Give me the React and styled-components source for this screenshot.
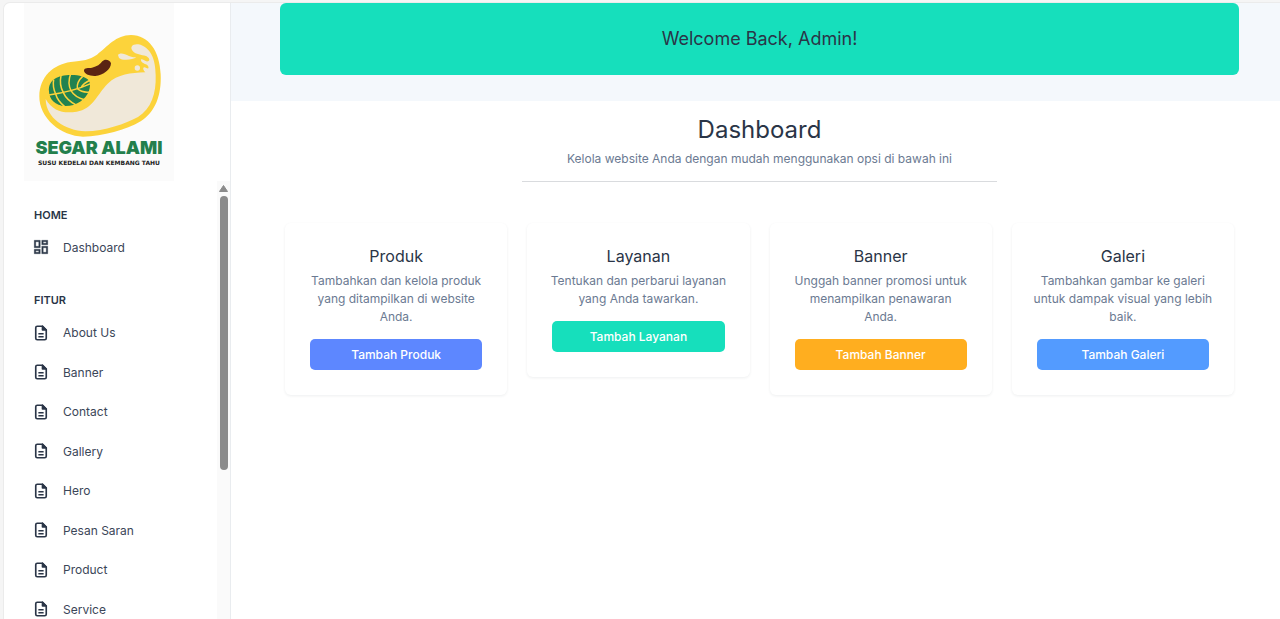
import React from "react";
import styled, { createGlobalStyle } from "styled-components";

const GlobalStyle = createGlobalStyle`
  * { box-sizing: border-box; }
  html, body { margin: 0; height: 100%; }
  #root { height: 100%; }
  body {
    background: #f5f5f5;
    color: #2a3547;
    font-family: Inter, "Liberation Sans", sans-serif;
    font-size: 12px;
    overflow: hidden;
  }
  h1, h2, h3, p, ul { margin: 0; padding: 0; font-weight: 400; }
`;

const Frame = styled.div`
  height: 100%;
  padding: 3px 0 0 4px;
`;

const Page = styled.div`
  display: flex;
  height: 100%;
  overflow: hidden;
  background: #fff;
  border-top-left-radius: 6px;
  box-shadow: 0 0 0 1px #ebebeb;
`;

const Sidebar = styled.aside`
  flex: 0 0 227px;
  display: flex;
  flex-direction: column;
  border-right: 1px solid #e9ecef;
`;

const Brand = styled.a`
  display: flex;
  flex-direction: column;
  align-items: center;
  width: 150px;
  height: 178px;
  margin-left: 20px;
  padding-top: 22px;
  background: #fbfbfb;
  text-decoration: none;
  white-space: nowrap;
  flex-shrink: 0;
`;

const BrandName = styled.span`
  color: #237f4c;
  font-size: 18px;
  line-height: 20px;
  font-weight: 900;
`;

const BrandTagline = styled.span`
  color: #222;
  font-family: "DejaVu Sans", sans-serif;
  font-size: 6px;
  line-height: 10px;
  font-weight: 700;
`;

const NavArea = styled.div`
  flex: 1;
  min-height: 0;
  display: flex;
  overflow: hidden;
`;

const Nav = styled.nav`
  flex: 1;
  padding: 24px 0 0 28px;
`;

const NavHeading = styled.h2`
  padding-left: 2px;
  font-size: 11px;
  line-height: 20px;
  font-weight: 600;
`;

const NavList = styled.ul`
  display: grid;
  grid-auto-rows: 1fr;
  list-style: none;
  min-height: ${(p) => p.$height}px;
  margin-bottom: 24px;
  margin-top: 3px;
`;

const NavLink = styled.a`
  display: flex;
  align-items: center;
  gap: 13px;
  height: 100%;
  color: #3b4658;
  font-size: 12px;
  text-decoration: none;
  svg { color: #2a3547; flex-shrink: 0; }
`;

const ScrollTrack = styled.div`
  flex: 0 0 13px;
  display: flex;
  flex-direction: column;
  align-items: center;
  gap: 4px;
  padding-top: 4px;
  background: #fafafa;
`;

const ScrollThumb = styled.div`
  width: 8px;
  height: 274px;
  border-radius: 4px;
  background: #8b8b8b;
`;

const Main = styled.main`
  flex: 1;
  min-width: 0;
`;

const Hero = styled.header`
  padding: 0 41px 26px 49px;
  background: #f4f8fc;
`;

const Welcome = styled.p`
  padding: 1px 0;
  border-radius: 6px;
  background: #16dfbc;
  font-size: 18px;
  line-height: 70px;
  text-align: center;
`;

const Content = styled.section`
  padding: 14px 46px 0 54px;
  text-align: center;
`;

const Title = styled.h1`
  font-size: 24px;
  line-height: 30px;
`;

const Subtitle = styled.p`
  margin-top: 5px;
  color: #6b7a92;
  font-size: 12px;
  line-height: 18px;
`;

const Divider = styled.hr`
  width: 50%;
  height: 1px;
  margin: 13px auto 41px;
  border: 0;
  background: #d9dbde;
`;

const Cards = styled.div`
  display: grid;
  grid-template-columns: repeat(4, 1fr);
  align-items: start;
  gap: 20px;
`;

const Card = styled.article`
  padding: 21px 20px 25px;
  border-radius: 6px;
  background: #fff;
  box-shadow: 0 1px 3px rgba(40, 50, 70, 0.08);
`;

const CardTitle = styled.h2`
  font-size: 16px;
  line-height: 24px;
`;

const CardText = styled.p`
  margin: 4px 0 13px;
  color: #6b7a92;
  font-size: 12px;
  line-height: 18px;
  white-space: pre-line;
`;

const CardActions = styled.div`
  display: flex;
  padding: 0 5px;
`;

const CardButton = styled.button`
  flex: 1;
  height: 31px;
  padding: 0;
  border: 0;
  border-radius: 5px;
  background: ${(p) => p.$color};
  color: #fff;
  font: 500 12px Inter, "Liberation Sans", sans-serif;
`;

const DashboardIcon = () => (
  <svg width="18" height="18" viewBox="0 0 24 24" fill="currentColor" stroke="currentColor" strokeWidth="0.4" aria-hidden="true">
    <path d="M19 5v2h-4V5h4M9 5v6H5V5h4m10 8v6h-4v-6h4M9 17v2H5v-2h4M21 3h-8v6h8V3zM11 3H3v10h8V3zm10 8h-8v10h8V11zm-10 4H3v6h8v-6z" />
  </svg>
);

const FileIcon = () => (
  <svg width="18" height="18" viewBox="0 0 24 24" fill="none" stroke="currentColor" strokeWidth="2.2" strokeLinejoin="round" aria-hidden="true">
    <path d="M14 3H7a2 2 0 0 0-2 2v14a2 2 0 0 0 2 2h10a2 2 0 0 0 2-2V8z" />
    <path d="M14 3v5h5z" fill="currentColor" />
    <path d="M8.500 13h7M8.500 17h7" strokeWidth="1.800" />
  </svg>
);

const BeanLogo = () => (
  <svg width="150" height="113" viewBox="0 0 450 339" aria-hidden="true">
    <path fill="#fcd33b" d="M46 214C47 155 87 119 140 111C178 106 195 106 219 89C250 65 276 30 321 30C374 31 407 77 410 148C413 210 394 262 350 289C306 315 238 334 177 335C112 334 45 280 46 214Z" />
    <path fill="#f0e8d9" d="M65 222C87 260 120 266 158 260C207 252 219 208 251 176C282 147 320 144 364 142C353 131 358 123 367 129C375 134 376 125 369 119C358 116 349 110 351 103C360 103 366 113 374 108C379 104 374 97 366 93C352 89 336 89 326 78C316 65 327 56 343 58C380 66 395 103 395 151C397 206 382 251 342 276C304 296 243 318 184 319C123 316 66 280 65 222Z" />
    <path fill="#f0e8d9" d="M282 90C287 82 301 85 315 93C325 98 332 96 337 97C327 105 295 108 285 99Z" />
    <circle cx="340" cy="129" r="8" fill="#f0e8d9" />
    <path fill="#5b2413" d="M180 136C181 127 193 130 204 128C219 125 229 118 235 109C242 100 258 104 261 115C261 133 238 151 214 153C198 154 179 147 180 136Z" />
    <path fill="#218250" d="M75 200C72 165 100 150 142 150C166 150 186 156 195 167C200 175 198 188 195 197C185 224 157 243 125 243C93 242 76 222 75 200Z" />
    <path
      fill="none"
      stroke="#fcd33b"
      strokeWidth="4.500"
      d="M70 211C105 206 150 199 200 176M95 207C88 192 86 180 89 164M118 203C109 187 107 171 111 152M141 197C133 181 133 165 140 146M160 191C158 177 164 165 176 154M172 186C178 176 187 171 199 165M95 207C99 222 109 234 122 245M118 203C125 219 139 231 156 240M141 197C149 211 162 219 181 224M160 191C170 200 182 203 198 201"
    />
  </svg>
);

const fitur = ["About Us", "Banner", "Contact", "Gallery", "Hero", "Pesan Saran", "Product", "Service"];

const cards = [
  { title: "Produk", text: "Tambahkan dan kelola produk\nyang ditampilkan di website\nAnda.", action: "Tambah Produk", color: "#5d87ff" },
  { title: "Layanan", text: "Tentukan dan perbarui layanan\nyang Anda tawarkan.", action: "Tambah Layanan", color: "#16dfbc" },
  { title: "Banner", text: "Unggah banner promosi untuk\nmenampilkan penawaran\nAnda.", action: "Tambah Banner", color: "#ffae1f" },
  { title: "Galeri", text: "Tambahkan gambar ke galeri\nuntuk dampak visual yang lebih\nbaik.", action: "Tambah Galeri", color: "#539bff" },
];

export default function App() {
  return (
    <>
      <GlobalStyle />
      <Frame>
        <Page>
          <Sidebar>
            <Brand href="#">
              <BeanLogo />
              <BrandName>SEGAR ALAMI</BrandName>
              <BrandTagline>SUSU KEDELAI DAN KEMBANG TAHU</BrandTagline>
            </Brand>
            <NavArea>
              <Nav>
                <NavHeading>HOME</NavHeading>
                <NavList $height={38}>
                  <li><NavLink href="#"><DashboardIcon />Dashboard</NavLink></li>
                </NavList>
                <NavHeading>FITUR</NavHeading>
                <NavList $height={316}>
                  {fitur.map((name) => (
                    <li key={name}><NavLink href="#"><FileIcon />{name}</NavLink></li>
                  ))}
                </NavList>
              </Nav>
              <ScrollTrack>
                <svg width="9" height="7" viewBox="0 0 9 7" aria-hidden="true">
                  <path d="M4.500 .5L8.500 6.500H.5Z" fill="#8b8b8b" stroke="#8b8b8b" strokeLinejoin="round" />
                </svg>
                <ScrollThumb />
              </ScrollTrack>
            </NavArea>
          </Sidebar>
          <Main>
            <Hero>
              <Welcome>Welcome Back, Admin!</Welcome>
            </Hero>
            <Content>
              <Title>Dashboard</Title>
              <Subtitle>Kelola website Anda dengan mudah menggunakan opsi di bawah ini</Subtitle>
              <Divider />
              <Cards>
                {cards.map((c) => (
                  <Card key={c.title}>
                    <CardTitle>{c.title}</CardTitle>
                    <CardText>{c.text}</CardText>
                    <CardActions>
                      <CardButton type="button" $color={c.color}>{c.action}</CardButton>
                    </CardActions>
                  </Card>
                ))}
              </Cards>
            </Content>
          </Main>
        </Page>
      </Frame>
    </>
  );
}
